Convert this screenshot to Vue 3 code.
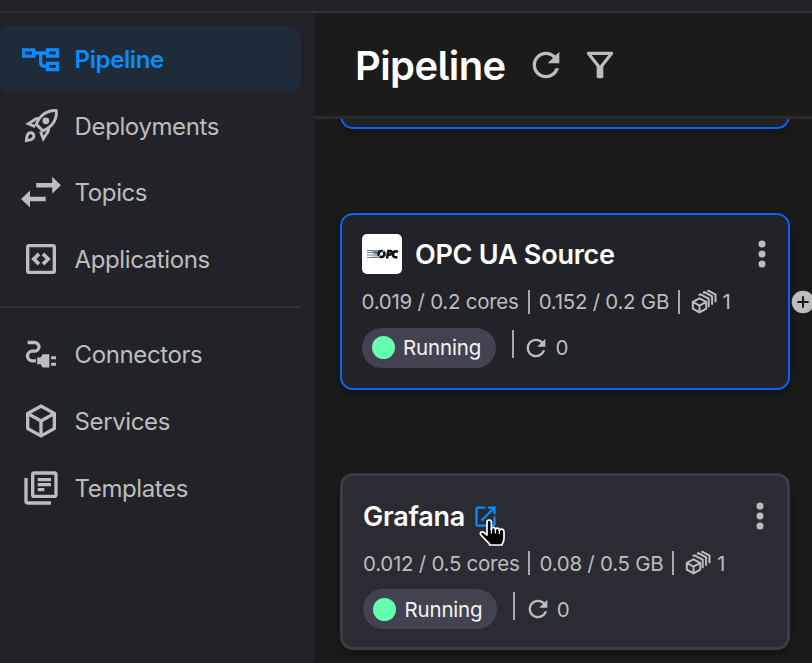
<script setup>
const mainItems = [
  { label: 'Pipeline', icon: 'pipeline', active: true },
  { label: 'Deployments', icon: 'rocket' },
  { label: 'Topics', icon: 'topics' },
  { label: 'Applications', icon: 'code' },
]
const extraItems = [
  { label: 'Connectors', icon: 'plug' },
  { label: 'Services', icon: 'cube' },
  { label: 'Templates', icon: 'templates' },
]
const cards = [
  { name: 'OPC UA Source', kind: 'source', logo: true, cpu: '0.019 / 0.2 cores', memory: '0.152 / 0.2 GB', replicas: 1, restarts: 0 },
  { name: 'Grafana', kind: 'service', link: true, cpu: '0.012 / 0.5 cores', memory: '0.08 / 0.5 GB', replicas: 1, restarts: 0 },
]
const refresh = 'M17.65 6.35C16.2 4.9 14.21 4 12 4c-4.42 0-7.99 3.58-7.99 8s3.57 8 7.99 8c3.73 0 6.84-2.55 7.73-6h-2.08c-.82 2.33-3.04 4-5.65 4-3.31 0-6-2.69-6-6s2.69-6 6-6c1.66 0 3.14.69 4.22 1.78L13 11h7V4l-2.35 2.35z'
</script>

<template>
  <div class="app">
    <div class="topbar"></div>
    <div class="body">
      <nav class="sidebar">
        <template v-for="(group, g) in [mainItems, extraItems]" :key="g">
          <div v-if="g" class="divider"></div>
          <a v-for="item in group" :key="item.label" class="item" :class="{ active: item.active }">
            <svg v-if="item.icon === 'pipeline'" class="nav-icon" viewBox="0 0 40 40" fill="none" stroke="currentColor" stroke-width="3.3">
              <path d="M2.7 10.9h10v6.2h-10zM26.5 10.9h10v6.2h-10zM26.5 24.3h10v6.2h-10zM14 14h12M19.7 14v9.6q0 3.7 3.7 3.7H26" />
            </svg>
            <svg v-else-if="item.icon === 'rocket'" class="nav-icon" viewBox="0 0 40 40" fill="none" stroke="currentColor" stroke-width="2.9">
              <path d="M35.3 4.7C27.6 3.8 19.3 8 15.3 18.3l6.5 6.5C32 20.8 36.2 12.6 35.3 4.7z" />
              <path d="M18.7 12.8c-2.8-.8-5 .3-6.500 1.800l-4.900 3.200 7 2.800M27.300 21.200c.8 2.900-.2 5-1.800 6.600l-3.200 5-2.800-7.200" />
              <path d="M5.400 34.600c.2-3 .3-5.300 2-7 1.200-1.200 3.400-1.200 4.600 0s1.200 3.400 0 4.600c-1.500 1.500-3.700 2-6.600 2.400z" />
              <circle cx="24.9" cy="14.8" r="3.4" fill="currentColor" stroke="none" />
            </svg>
            <svg v-else-if="item.icon === 'topics'" class="nav-icon" viewBox="0 0 40 40" fill="currentColor">
              <path d="M15.2 10.100h16V3.800l8.700 8.500-8.700 8.500v-6.300h-16zM24.700 23.800H9v-6.400L0 26l9 8.600v-6.400h15.700z" />
            </svg>
            <svg v-else-if="item.icon === 'code'" class="nav-icon" viewBox="0 0 24 24" fill="none" stroke="currentColor" stroke-width="2">
              <rect x="4" y="4" width="16" height="16" rx=".8" />
              <path d="M10.800 8.900 7.700 12l3.100 3.100M13.200 8.900l3.100 3.100-3.100 3.100" stroke-width="2.200" />
            </svg>
            <svg v-else-if="item.icon === 'plug'" class="nav-icon" viewBox="0 0 24 24" fill="currentColor">
              <path d="M4 4.500h4c1.500 0 2.800 1.100 2.800 2.500S9.500 9.700 8 9.700H6.800c-1.600 0-2.900 1.400-2.900 2.900s1.300 2.900 2.900 2.900H9" fill="none" stroke="currentColor" stroke-width="2" />
              <path d="M13 11.500h4v8h-4l-1.200-2H9.700v-4h2.100zM18 12.700h3v1.800h-3zM18 16.700h3v1.800h-3z" />
            </svg>
            <svg v-else-if="item.icon === 'cube'" class="nav-icon" viewBox="0 0 24 24" fill="currentColor">
              <path d="M21,16.5C21,16.88 20.79,17.21 20.47,17.38L12.57,21.82C12.41,21.94 12.21,22 12,22C11.79,22 11.59,21.94 11.43,21.82L3.53,17.38C3.21,17.21 3,16.88 3,16.5V7.5C3,7.12 3.21,6.79 3.53,6.62L11.43,2.18C11.59,2.06 11.79,2 12,2C12.21,2 12.41,2.06 12.57,2.18L20.47,6.62C20.79,6.79 21,7.12 21,7.5V16.5M12,4.15L6.04,7.5L12,10.85L17.96,7.5L12,4.15M5,15.91L11,19.29V12.58L5,9.21V15.91M19,15.91V9.21L13,12.58V19.29L19,15.91Z" />
            </svg>
            <svg v-else class="nav-icon" viewBox="0 0 24 24" fill="none" stroke="currentColor" stroke-width="2">
              <rect x="7" y="3" width="14" height="14" rx="1" />
              <path d="M3 6v14q0 1 1 1h14M10 7h8M10 10h8M10 13h4" />
            </svg>
            <span>{{ item.label }}</span>
          </a>
        </template>
      </nav>

      <main class="main">
        <header class="header">
          <h1>Pipeline</h1>
          <svg class="tool" viewBox="0 0 24 24"><path :d="refresh" /></svg>
          <svg class="tool filter" viewBox="0 0 24 24"><path d="M7 6h10l-5.010 6.300L7 6zm-2.750-.390C6.270 8.200 10 13 10 13v6c0 .550.450 1 1 1h2c.550 0 1-.450 1-1v-6s3.720-4.800 5.740-7.390c.510-.660.040-1.610-.790-1.610H5.040c-.830 0-1.300.950-.790 1.610z" /></svg>
        </header>
        <div class="canvas">
          <section class="card source previous"></section>
          <section v-for="card in cards" :key="card.name" class="card" :class="card.kind">
            <div class="head">
              <svg v-if="card.logo" class="logo" viewBox="0 0 40 40">
                <rect width="40" height="40" rx="5" fill="#fff" />
                <path d="M5 16.500h13M5 18.500h12M5 21h11M5 23.500h13" stroke="#555c66" stroke-width=".8" />
                <path d="M10 17h7v3h-5zM10 22h8" stroke="#8ba2bb" stroke-width="1" fill="#60758f" />
                <g fill="none" stroke="#111" stroke-width="2.600">
                  <ellipse cx="19.500" cy="20" rx="3" ry="3" />
                  <path d="M25 24.500l1.300-7.400h2q1.800 0 1.500 1.800t-2.500 1.800h-1.500M36 17.700q-4.300-1.500-4.900 2.300t4.300 3.200" />
                </g>
                <path d="m16 24 6-8" stroke="#fff" stroke-width=".9" />
              </svg>
              <h2>{{ card.name }}</h2>
              <span v-if="card.link" class="link">
                <svg class="open" viewBox="0 0 24 24"><path d="M19 19H5V5h7V3H5c-1.110 0-2 .9-2 2v14c0 1.100.890 2 2 2h14c1.100 0 2-.9 2-2v-7h-2v7zM14 3v2h3.590l-9.830 9.830 1.410 1.410L19 6.410V10h2V3h-7z" /></svg>
                <svg class="cursor" viewBox="0 0 30 30">
                  <path d="M9 17V4.500Q9 2 11.200 2t2.200 2.500v7q0-2 2-2t2 2.200q.2-1.500 2-1.500t2 2.300q.3-1.400 2-1.400 2.600 0 2.600 3V20q0 4-2 6.300V27H11.500v-1.200L3.400 17.500Q1.300 15 3.200 14q1.500-.7 3.200.8z" fill="#000" stroke="#fff" stroke-width="1.700" stroke-linejoin="round" />
                  <path d="M13.400 10v5.500M17.400 11v4.500M21.400 12v4" stroke="#fff" stroke-width="1.300" />
                </svg>
              </span>
              <svg class="menu" viewBox="0 0 8 28"><circle cx="4" cy="4" r="3.500" /><circle cx="4" cy="14" r="3.500" /><circle cx="4" cy="24" r="3.500" /></svg>
            </div>
            <div class="stats">
              <span>{{ card.cpu }}</span>
              <i class="bar"></i>
              <span>{{ card.memory }}</span>
              <i class="bar"></i>
              <svg class="replicas" viewBox="0 0 26 24" fill="none" stroke="currentColor" stroke-width="2">
                <path d="M8.500 8.300l6.700 3.600v6.800l-6.700 3.700-6.700-3.700v-6.800zM1.800 11.900l6.700 3.700 6.700-3.700M8.500 15.600v6.800" stroke-linejoin="round" />
                <path d="M7.500 5.100l2-.8 8.200 4.400v8.500M12 2.700l1.500-.5 7.600 4.200v8.300M16.300 1l1-.3 7.200 4v7.600" />
              </svg>
              <span>{{ card.replicas }}</span>
            </div>
            <div class="state">
              <span class="pill"><i class="dot"></i><span>Running</span></span>
              <i class="bar tall"></i>
              <svg class="restart" viewBox="0 0 24 24"><path :d="refresh" /></svg>
              <span>{{ card.restarts }}</span>
            </div>
            <svg v-if="card.logo" class="plus" viewBox="0 0 24 24"><circle cx="12" cy="12" r="11.300" fill="#bdbdbd" /><path d="M12 6.300v11.400M6.300 12h11.400" stroke="#1b1b1b" stroke-width="2" /></svg>
          </section>
        </div>
      </main>
    </div>
  </div>
</template>

<style>
body { margin: 0; background: #1b1b1b; }
</style>

<style scoped>
* { box-sizing: border-box; }
.app { height: 663px; overflow: hidden; display: flex; flex-direction: column; background: #1b1b1b; color: #bdbdbd; font-family: Inter, sans-serif; }
.topbar { height: 13px; flex: none; background: #222328; border-bottom: 2px solid #333337; }
.body { flex: 1; min-height: 0; display: flex; }
.sidebar { width: 314px; flex: none; background: #222328; padding: 13px 13px 0 0; display: flex; flex-direction: column; }
.item { height: 66.700px; flex: none; display: flex; align-items: center; gap: 13.600px; padding-left: 21px; font-size: 24px; letter-spacing: -.39px; }
.item span { padding-top: .5px; }
.item.active { color: #0a8cff; background: #202b3a; border-radius: 13px; font-weight: 600; }
.nav-icon { width: 40px; height: 40px; flex: none; overflow: visible; }
.divider { height: 2px; flex: none; background: #333337; margin: 13.500px 0 13px; }
.main { flex: 1; min-width: 0; display: flex; flex-direction: column; }
.header { height: 106px; flex: none; display: flex; align-items: center; padding-left: 41px; border-bottom: 3px solid #2a2a2b; }
h1 { margin: 0; width: 171px; padding-top: 3px; color: #fff; font-size: 40px; font-weight: 600; line-height: 48px; letter-spacing: -.6px; font-feature-settings: "cv05"; }
.tool { width: 40px; height: 40px; fill: #bdbdbd; }
.filter { margin-left: 13.500px; }
.canvas { flex: 1; min-height: 0; overflow: hidden; display: flex; flex-direction: column; gap: 84px; padding-left: 26px; }
.card { position: relative; width: 450px; height: 177px; flex: none; border-radius: 13px; background: #222328; box-shadow: 0 3px 9px rgba(0, 0, 0, .4); padding: 20px; }
.source { border: 2px solid #0864f2; padding: 19.400px 19.400px 19.400px 19.600px; }
.service { border: 3px solid #3b3b43; background: #2b2b34; }
.source + .service { margin-top: -1px; }
.previous { margin-top: -167px; }
.head { display: flex; align-items: center; height: 40px; }
.logo { width: 40px; height: 40px; margin-right: 13.300px; }
h2 { margin: 0; padding-top: 1.400px; color: #fff; font-size: 27px; font-weight: 600; line-height: 40px; letter-spacing: -.24px; white-space: nowrap; }
.menu { width: 8px; height: 28px; fill: #bdbdbd; margin-left: auto; margin-right: 2.900px; }
.link { position: relative; display: flex; margin-left: 7px; }
.open { width: 27px; height: 27px; fill: #0a8cff; }
.cursor { position: absolute; left: 6px; top: 15px; width: 30px; height: 30px; }
.stats { display: flex; align-items: center; height: 27px; margin-top: 13.700px; font-size: 20.500px; letter-spacing: -.26px; white-space: nowrap; }
.bar { width: 2px; height: 24px; background: #a9a9ad; margin: 0 9px; flex: none; }
.replicas { width: 26px; height: 24px; margin: 0 5.500px 0 2px; }
.state { display: flex; align-items: center; height: 40px; margin-top: 12.800px; font-size: 20.500px; letter-spacing: -.18px; }
.pill { display: flex; align-items: center; gap: 8.500px; width: 134px; height: 40px; border-radius: 20px; background: #434250; color: #f3f3f5; padding-left: 10px; }
.dot { width: 23px; height: 23px; border-radius: 50%; background: #65ffaf; }
.tall { height: 28px; margin: -7px 8.800px 0 16px; }
.restart { width: 28px; height: 28px; fill: #bdbdbd; margin-right: 5px; }
.plus { position: absolute; left: 449px; top: 74.500px; width: 24px; height: 24px; }
</style>
